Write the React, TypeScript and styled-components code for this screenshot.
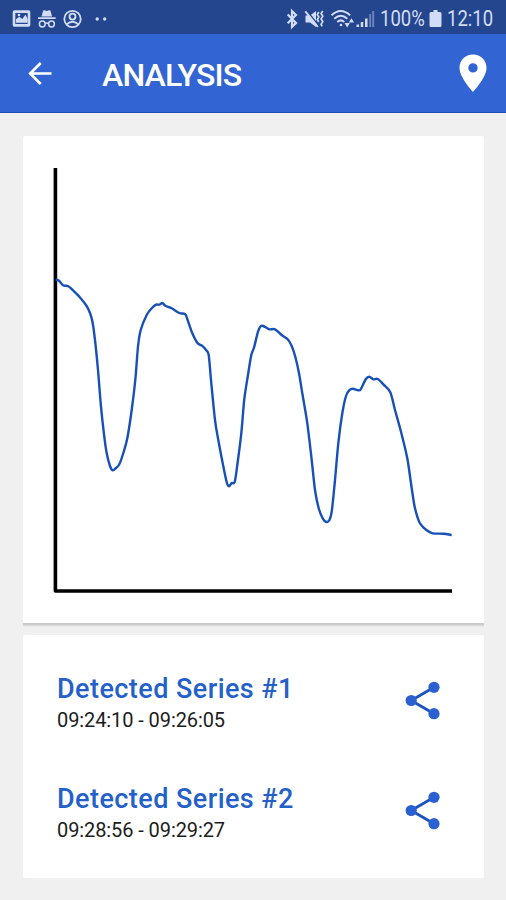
import React from "react";
import styled, { createGlobalStyle } from "styled-components";

const GlobalStyle = createGlobalStyle`
  * { box-sizing: border-box; }
  body { margin: 0; background: #f0f0f0; }
  svg { display: block; flex: none; }
`;

const Screen = styled.div`
  width: 506px;
  height: 900px;
  display: flex;
  flex-direction: column;
  background: #f0f0f0;
  font-family: Roboto, "Liberation Sans", sans-serif;
  overflow: hidden;
`;

const StatusBar = styled.header`
  height: 34px;
  flex: none;
  display: flex;
  align-items: center;
  justify-content: space-between;
  padding: 3px 13px 0 12px;
  background: #24468f;
  color: #d3dcf5;
`;

const StatusGroup = styled.div`
  display: flex;
  align-items: center;
`;

const StatusText = styled.span<{ $width: number }>`
  width: ${(p) => p.$width}px;
  font-size: 21.5px;
  line-height: 24px;
  white-space: nowrap;
  transform: scaleX(0.86);
  transform-origin: left center;
`;

const AppBar = styled.div`
  height: 79px;
  flex: none;
  display: flex;
  align-items: center;
  padding: 0 18px 0 28px;
  background: #3364d3;
  border-bottom: 1px solid #1d50b4;
`;

const Title = styled.h1`
  flex: 1;
  margin: 3px 0 0 50px;
  font-size: 32px;
  line-height: 40px;
  font-weight: 500;
  letter-spacing: -0.8px;
  color: #fff;
`;

const IconButton = styled.button`
  padding: 0;
  border: 0;
  background: none;
  color: ${(p) => p.color || "#fff"};
`;

const Content = styled.main`
  display: flex;
  flex-direction: column;
  gap: 12px;
  padding: 23px 22px 0 23px;
`;

const Card = styled.section<{ $height: number; $raised?: boolean }>`
  height: ${(p) => p.$height}px;
  border-radius: ${(p) => (p.$raised ? "2px 2px 0 0" : "2px")};
  background: #fff;
  box-shadow: ${(p) =>
    p.$raised ? "0 1px 0 #cacaca, 0 2px 0 #cdcdcd, 0 3px 0 #dadada, 0 4px 0 #e8e8e8" : "none"};
`;

const SeriesList = styled(Card)`
  padding: 38px 43px 0 34px;
`;

const SeriesRow = styled.div`
  height: 109.6px;
  display: flex;
  align-items: flex-start;
  justify-content: space-between;
`;

const SeriesName = styled.div`
  font-size: 27px;
  line-height: 32px;
  font-weight: 500;
  letter-spacing: 0.44px;
  color: #2460ca;
`;

const SeriesTime = styled.div`
  font-size: 20px;
  line-height: 24px;
  margin-top: 3px;
  letter-spacing: -0.09px;
  color: #1c1c1c;
`;

const ShareButton = styled(IconButton)`
  margin-top: 8px;
`;

type Point = [number, number];

const samples: Point[] = [
  [55.7, 279.3], [59, 280.7], [63, 285.3], [68.3, 286.2], [73.3, 290.7], [80, 297.5],
  [86.3, 305.5], [90, 313], [92.5, 322], [95, 340], [98, 370], [101, 406.7], [104.3, 436.7],
  [106.7, 453.3], [110, 466], [112.7, 470.3], [116, 468], [119.3, 464.3], [122.7, 455],
  [127.3, 438.3], [131.7, 410], [135.3, 380], [138, 346.7], [140.7, 330], [146.7, 315],
  [151.7, 308.3], [156, 304.7], [159.3, 304.7], [162.3, 303], [165.3, 305.7], [171.7, 308.3],
  [179.3, 313], [185, 314], [187.3, 319], [191.7, 331.7], [197.3, 342.7], [202, 345.7],
  [206, 350], [208.7, 355], [211, 380], [215, 420], [218.3, 440], [222.7, 463.3],
  [226.7, 482.3], [229, 486.3], [231.7, 483], [234.7, 482], [237.3, 465], [241.3, 433.3],
  [244.2, 400], [247.7, 376.7], [251.3, 355], [254, 347.7], [258, 331.7], [260.7, 326.3],
  [263.3, 326], [269.3, 329.3], [275, 329.3], [281.7, 335], [287.7, 339.3], [291.7, 346],
  [295.3, 356.7], [299, 373.3], [302.3, 393.3], [307.3, 423.3], [311.7, 460], [315, 490],
  [318.7, 508.3], [322.7, 518.3], [326.3, 522], [329.3, 520.3], [331.7, 511.7], [335, 480],
  [338.3, 443.3], [342.3, 413.3], [346, 396], [349.3, 390.3], [352.7, 388.7], [358.3, 390.3],
  [360.7, 389.3], [365.7, 379.3], [369.3, 376.7], [373.3, 379.3], [377.7, 379], [383.3, 384.3],
  [390.3, 392.3], [395, 410], [401, 431.7], [407.3, 458.3], [411, 483.3], [414.3, 505],
  [417.3, 516.7], [420, 523.3], [426, 529.7], [432.7, 533.3], [443.3, 533.7], [451.7, 535],
];

/* Joins the samples with Catmull-Rom segments written as cubic Béziers. */
function smoothPath(points: Point[]): string {
  const at = (i: number) => points[Math.max(0, Math.min(points.length - 1, i))];
  let d = `M${points[0][0]} ${points[0][1]}`;
  for (let i = 0; i < points.length - 1; i++) {
    const [a, b, c, e] = [at(i - 1), at(i), at(i + 1), at(i + 2)];
    const k = 7;
    d += `C${b[0] + (c[0] - a[0]) / k} ${b[1] + (c[1] - a[1]) / k} ${c[0] - (e[0] - b[0]) / k} ${c[1] - (e[1] - b[1]) / k} ${c[0]} ${c[1]}`;
  }
  return d;
}

const Chart = () => (
  <svg width="461" height="487" viewBox="23 136 461 487" fill="none">
    <path d="M55.4 168V591H452" stroke="#000" strokeWidth="3.6" strokeLinejoin="round" />
    <path d={smoothPath(samples)} stroke="#1950b8" strokeWidth="2.4" strokeLinejoin="round" />
  </svg>
);

const NotificationIcons = () => (
  <svg width="100" height="22" viewBox="12 7 100 22" fill="currentColor">
    <path fillRule="evenodd" d="M14.5 9.3h14q1.8 0 1.8 1.8v12.8q0 1.8-1.8 1.8h-14q-1.8 0-1.8-1.8V11.100q0-1.800 1.800-1.800zM15.300 12v10.900h12.400V12z" />
    <path d="M16 21.800v-3.500l3.300-2.500 3 2.200 3-4.300 2.300 3.700v4.400z" />
    <circle cx="19" cy="14" r="1.300" />
    <path d="M41.500 15.500l1.600-5.700q.4-.8 1.300-.5l2.400.7 2.400-.7q.9-.3 1.300.5l1.600 5.700zM38 16.300h17.600v1.700H38z" />
    <g fill="none" stroke="currentColor" strokeWidth="1.500">
      <circle cx="42.300" cy="23" r="2.900" />
      <circle cx="51.500" cy="23" r="2.900" />
      <path d="M45.200 22.500q1.700-1 3.400 0" />
      <circle cx="72.500" cy="18" r="8.200" strokeWidth="1.800" />
      <circle cx="72.500" cy="15.600" r="3" strokeWidth="1.900" />
      <path d="M66.800 23.300q5.700-5 11.400 0" strokeWidth="1.900" />
    </g>
    <circle cx="97.200" cy="18" r="1.700" />
    <circle cx="104.700" cy="18" r="1.700" />
  </svg>
);

const SignalIcons = () => (
  <svg width="94" height="22" viewBox="286 7 94 22" fill="none" stroke="currentColor">
    <path d="M287.700 13.500l8.300 8.400-4 3.900V10l4 3.900-8.300 8.400" strokeWidth="2.200" />
    <path d="M305.500 14.500h4.500l6-4.500v16l-6-4.500h-4.500z" fill="currentColor" stroke="none" />
    <path d="M306.500 9.300l12 15.200" stroke="#24468f" strokeWidth="1.500" />
    <path d="M305.300 10.300l12.500 15.500" strokeWidth="1.900" />
    <path d="M318.800 11l-1.500 2.500 1.500 2.500-1.500 2.500 1.500 2.500M322.800 10l-1.700 2.500 1.700 2.700-1.700 2.700 1.700 2.700-1.700 2.700 1 2" strokeWidth="1.700" />
    <g strokeWidth="2">
      <path d="M331.500 14.300q9.300-8.500 18.600 0M334.300 17.700q6.500-6 13 0M337.300 21q3.500-3.300 7 0" />
      <circle cx="341" cy="24" r="1.300" fill="currentColor" stroke="none" />
    </g>
    <path d="M344.600 22h5.200l-2.600 4.500zM348.800 21.500l2.600-4.300 2.700 4.300z" fill="currentColor" stroke="none" />
    <g strokeWidth="2.500">
      <path d="M357.800 26v-2.500M362 26v-5M366.300 26v-8.500" />
      <path d="M370.200 26V13M373.200 26V10" opacity=".42" strokeWidth="1.900" />
    </g>
  </svg>
);

const BatteryIcon = () => (
  <svg width="18" height="20" viewBox="0 0 18 20" fill="currentColor">
    <path d="M4.500 1h4v2h2.500q1.500 0 1.500 1.500v12q0 1.500-1.500 1.500H2q-1.500 0-1.500-1.500v-12Q.5 3 2 3h2.500z" />
  </svg>
);

const BackIcon = () => (
  <svg width="24" height="24" viewBox="0 0 24 24" fill="none" stroke="currentColor" strokeWidth="2.700">
    <path d="M23.500 12.500H2.500M12.700 2L2.200 12.500 12.700 23" />
  </svg>
);

const PinIcon = () => (
  <svg width="30" height="40" viewBox="0 0 30 40" fill="currentColor">
    <path fillRule="evenodd" d="M15 1.500C7.300 1.500 1.500 7.300 1.500 14.800 1.500 24.800 15 39 15 39s13.500-14.200 13.500-24.200C28.500 7.300 22.700 1.500 15 1.500zm0 8.700a4.700 4.700 0 1 1 0 9.400 4.700 4.700 0 0 1 0-9.400z" />
  </svg>
);

const ShareIcon = () => (
  <svg width="36" height="40" viewBox="0 0 36 40" fill="currentColor">
    <path d="M29 6.300L6.200 19.500 29 32.700" fill="none" stroke="#1c54bf" strokeWidth="2.900" />
    <circle cx="29" cy="6.300" r="5.600" />
    <circle cx="6.200" cy="19.500" r="5.600" />
    <circle cx="29" cy="32.700" r="5.600" />
  </svg>
);

const series = [
  { name: "Detected Series #1", time: "09:24:10 - 09:26:05" },
  { name: "Detected Series #2", time: "09:28:56 - 09:29:27" },
];

export default function App() {
  return (
    <>
      <GlobalStyle />
      <Screen>
        <StatusBar>
          <StatusGroup><NotificationIcons /></StatusGroup>
          <StatusGroup>
            <SignalIcons />
            <StatusText $width={49}>100%</StatusText>
            <BatteryIcon />
            <StatusText $width={46}>12:10</StatusText>
          </StatusGroup>
        </StatusBar>
        <AppBar>
          <IconButton aria-label="Back"><BackIcon /></IconButton>
          <Title>ANALYSIS</Title>
          <IconButton aria-label="Location"><PinIcon /></IconButton>
        </AppBar>
        <Content>
          <Card $height={487} $raised><Chart /></Card>
          <SeriesList $height={243}>
            {series.map((s) => (
              <SeriesRow key={s.name}>
                <div>
                  <SeriesName>{s.name}</SeriesName>
                  <SeriesTime>{s.time}</SeriesTime>
                </div>
                <ShareButton color="#2b60d0" aria-label={`Share ${s.name}`}><ShareIcon /></ShareButton>
              </SeriesRow>
            ))}
          </SeriesList>
        </Content>
      </Screen>
    </>
  );
}
